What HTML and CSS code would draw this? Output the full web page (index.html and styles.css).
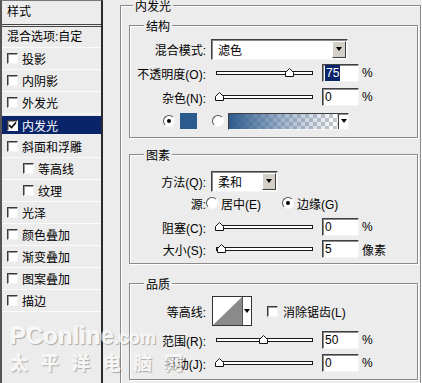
FILE: index.html
```html
<!DOCTYPE html>
<html lang="zh-CN">
<head>
    <meta charset="UTF-8">
    <title>图层样式 - 内发光</title>
    <link rel="stylesheet" href="styles.css">
</head>
<body>
    <div class="dialog">
        <!-- style list -->
        <div class="sidebar">
            <div class="side-head">样式</div>
            <div class="side-blend">混合选项:自定</div>
            <div class="side-item"><span class="cb"></span>投影</div>
            <div class="side-item"><span class="cb"></span>内阴影</div>
            <div class="side-item"><span class="cb"></span>外发光</div>
            <div class="side-item active"><span class="cb checked"><svg width="9" height="9" viewBox="0 0 9 9"><path d="M1 4 L3.5 6.5 L8 1.5" fill="none" stroke="#000" stroke-width="1.6"/></svg></span>内发光</div>
            <div class="side-item"><span class="cb"></span>斜面和浮雕</div>
            <div class="side-item sub"><span class="cb"></span>等高线</div>
            <div class="side-item sub"><span class="cb"></span>纹理</div>
            <div class="side-item"><span class="cb"></span>光泽</div>
            <div class="side-item"><span class="cb"></span>颜色叠加</div>
            <div class="side-item"><span class="cb"></span>渐变叠加</div>
            <div class="side-item"><span class="cb"></span>图案叠加</div>
            <div class="side-item"><span class="cb"></span>描边</div>
        </div>

        <div class="main">
            <fieldset class="outer">
                <legend class="outer-title">内发光</legend>

                <fieldset class="group structure">
                    <legend>结构</legend>
                    <div class="row">
                        <span class="lbl">混合模式:</span>
                        <div class="select blend-select"><span class="select-text">滤色</span><span class="drop-btn"><i class="arrow"></i></span></div>
                    </div>
                    <div class="row">
                        <span class="lbl">不透明度(O):</span>
                        <div class="slider"><div class="track"></div><svg class="thumb" style="left:74px" width="9" height="9" viewBox="0 0 9 9"><polygon points="0.5,8.5 0.5,4.5 4.5,0.5 8.5,4.5 8.5,8.5" fill="#fff" stroke="#111"/></svg></div>
                        <div class="num"><span class="sel">75</span></div>
                        <span class="unit">%</span>
                    </div>
                    <div class="row">
                        <span class="lbl">杂色(N):</span>
                        <div class="slider"><div class="track"></div><svg class="thumb" style="left:4px" width="9" height="9" viewBox="0 0 9 9"><polygon points="0.5,8.5 0.5,4.5 4.5,0.5 8.5,4.5 8.5,8.5" fill="#fff" stroke="#111"/></svg></div>
                        <div class="num">0</div>
                        <span class="unit">%</span>
                    </div>
                    <div class="row color-row">
                        <span class="radio checked"></span>
                        <span class="swatch"></span>
                        <span class="radio radio-grad"></span>
                        <div class="gradient"><div class="gradient-fill"></div><div class="gradient-drop"><i class="arrow"></i></div></div>
                    </div>
                </fieldset>

                <fieldset class="group elements">
                    <legend>图素</legend>
                    <div class="row">
                        <span class="lbl">方法(Q):</span>
                        <div class="select method-select"><span class="select-text">柔和</span><span class="drop-btn"><i class="arrow"></i></span></div>
                    </div>
                    <div class="row">
                        <span class="lbl">源:</span>
                        <span class="opt"><span class="radio"></span><span class="opt-text">居中(E)</span></span>
                        <span class="opt"><span class="radio checked"></span><span class="opt-text">边缘(G)</span></span>
                    </div>
                    <div class="row row-gap">
                        <span class="lbl">阻塞(C):</span>
                        <div class="slider"><div class="track"></div><svg class="thumb" style="left:4px" width="9" height="9" viewBox="0 0 9 9"><polygon points="0.5,8.5 0.5,4.5 4.5,0.5 8.5,4.5 8.5,8.5" fill="#fff" stroke="#111"/></svg></div>
                        <div class="num">0</div>
                        <span class="unit">%</span>
                    </div>
                    <div class="row">
                        <span class="lbl">大小(S):</span>
                        <div class="slider"><div class="track"></div><svg class="thumb" style="left:6px" width="9" height="9" viewBox="0 0 9 9"><polygon points="0.5,8.5 0.5,4.5 4.5,0.5 8.5,4.5 8.5,8.5" fill="#fff" stroke="#111"/></svg></div>
                        <div class="num">5</div>
                        <span class="unit">像素</span>
                    </div>
                </fieldset>

                <fieldset class="group quality">
                    <legend>品质</legend>
                    <div class="row contour-row">
                        <span class="lbl">等高线:</span>
                        <div class="contour">
                            <svg width="29" height="28" viewBox="0 0 29 28"><rect width="29" height="28" fill="#fff"/><polygon points="0,28 29,0 29,28" fill="#8a8a8a"/></svg>
                            <div class="contour-drop"><i class="arrow"></i></div>
                        </div>
                        <span class="cb aa-cb"></span>
                        <span>消除锯齿(L)</span>
                    </div>
                    <div class="row range-row">
                        <span class="lbl">范围(R):</span>
                        <div class="slider"><div class="track"></div><svg class="thumb" style="left:48px" width="9" height="9" viewBox="0 0 9 9"><polygon points="0.5,8.5 0.5,4.5 4.5,0.5 8.5,4.5 8.5,8.5" fill="#fff" stroke="#111"/></svg></div>
                        <div class="num">50</div>
                        <span class="unit">%</span>
                    </div>
                    <div class="row jitter-row">
                        <span class="lbl">抖动(J):</span>
                        <div class="slider"><div class="track"></div><svg class="thumb" style="left:4px" width="9" height="9" viewBox="0 0 9 9"><polygon points="0.5,8.5 0.5,4.5 4.5,0.5 8.5,4.5 8.5,8.5" fill="#fff" stroke="#111"/></svg></div>
                        <div class="num">0</div>
                        <span class="unit">%</span>
                    </div>
                </fieldset>
            </fieldset>
        </div>

        <!-- site watermark over the screenshot -->
        <div class="watermark">
            <div class="wm-logo">PConline<span class="wm-com">.com</span></div>
            <div class="wm-name">太平洋电脑网</div>
        </div>
    </div>
</body>
</html>
```

FILE: styles.css
```css
body {
    margin: 0;
    background: #ececec;
    font: 12px "Liberation Sans", "Noto Sans CJK SC", sans-serif;
    color: #000;
    width: 422px;
    height: 383px;
    overflow: hidden;
}

.dialog {
    display: flex;
    height: 383px;
    position: relative;
    overflow: hidden;
}

/* left list */
.sidebar {
    width: 99px;
    flex-shrink: 0;
    border-left: 2px solid #555;
    border-right: 2px solid #2a2a2a;
    border-top: 1px solid #777;
}

.side-head {
    height: 23px;
    line-height: 23px;
    padding-left: 5px;
    border-bottom: 3px double #444;
}

.side-blend {
    height: 20px;
    line-height: 20px;
    padding-left: 5px;
    border-bottom: 1px solid #fafafa;
}

.side-item {
    height: 21px;
    display: flex;
    align-items: center;
    padding-left: 5px;
    border-bottom: 1px solid #fafafa;
}

.side-item.sub {
    padding-left: 21px;
}

.side-item.active {
    height: 18px;
    background: #0a246a;
    color: #fff;
    border-top: 2px solid #ececec;
    border-bottom: 2px solid #ececec;
}

.cb {
    width: 9px;
    height: 9px;
    flex-shrink: 0;
    background: #fff;
    border: 1px solid;
    border-color: #3a3a3a #f4f4f4 #f4f4f4 #3a3a3a;
    box-shadow: inset 1px 1px 0 #9a9a9a;
    margin-right: 4px;
    display: flex;
    align-items: center;
    justify-content: center;
}

.cb svg {
    display: block;
}

/* right side */
.main {
    flex: 1;
    padding-left: 17px;
    padding-right: 1px;
    min-width: 0;
}

fieldset {
    margin: 0;
    min-width: 0;
    border: 1px solid #8a8a8a;
    box-shadow: inset 1px 1px 0 #fff, 1px 1px 0 #fff;
}

legend {
    height: 10px;
    line-height: 14px;
    padding: 0 2px;
    margin-left: 14px;
    background: #ececec;
}

.outer {
    padding: 10px 2px 30px 8px;
}

.outer-title {
    margin-left: 4px;
}

.group {
    padding: 0;
}

.structure {
    padding: 8px 0 5px;
}

.elements {
    margin-top: 11px;
    padding: 11px 0 3px;
}

.quality {
    margin-top: 14px;
    padding: 8px 0 5px;
}

.row {
    display: flex;
    align-items: center;
    height: 22px;
}

.structure .row + .row {
    margin-top: 2px;
}

.row-gap {
    margin-top: 2px;
}

.contour-row {
    height: 30px;
}

.range-row {
    margin-top: 3px;
}

.jitter-row {
    margin-top: 1px;
}

.lbl {
    width: 76px;
    flex-shrink: 0;
    text-align: right;
}

/* sunken controls */
.select,
.num,
.gradient {
    background: #fff;
    border: 1px solid;
    border-color: #404040 #f4f4f4 #f4f4f4 #404040;
    box-shadow: inset 1px 1px 0 #8a8a8a;
}

.select {
    display: flex;
    align-items: center;
    margin-left: 5px;
    height: 19px;
}

.blend-select {
    width: 135px;
}

.method-select {
    width: 65px;
}

.select-text {
    padding-left: 6px;
}

.drop-btn {
    margin-left: auto;
    margin-right: 1px;
    width: 12px;
    height: 15px;
    background: #d4d0c8;
    border: 1px solid;
    border-color: #fff #404040 #404040 #fff;
    display: flex;
    align-items: center;
    justify-content: center;
}

.arrow {
    width: 0;
    height: 0;
    border-left: 3px solid transparent;
    border-right: 3px solid transparent;
    border-top: 4px solid #000;
}

.slider {
    position: relative;
    width: 102px;
    height: 22px;
    margin-left: 5px;
    display: flex;
    align-items: center;
    flex-shrink: 0;
}

.track {
    margin-left: 5px;
    width: 95px;
    height: 2px;
    background: #fff;
    border: 1px solid #1a1a1a;
}

.thumb {
    position: absolute;
    top: 6px;
    display: block;
}

.num {
    width: 33px;
    height: 16px;
    line-height: 16px;
    padding-left: 2px;
    margin-left: 9px;
    flex-shrink: 0;
}

.sel {
    background: #0a246a;
    color: #fff;
    padding: 1px 1px;
}

.unit {
    margin-left: 3px;
}

/* colour row */
.color-row {
    padding-left: 33px;
}

.radio {
    width: 12px;
    height: 12px;
    box-sizing: border-box;
    border-radius: 50%;
    background: #fff;
    border: 1px solid;
    border-color: #555 #fafafa #fafafa #555;
    position: relative;
    flex-shrink: 0;
}

.radio.checked::after {
    content: "";
    position: absolute;
    left: 3px;
    top: 3px;
    width: 4px;
    height: 4px;
    border-radius: 50%;
    background: #000;
}

.swatch {
    width: 17px;
    height: 16px;
    margin-left: 5px;
    background: #2b5b8c;
    flex-shrink: 0;
}

.radio-grad {
    margin-left: 15px;
}

.gradient {
    display: flex;
    margin-left: 4px;
    width: 119px;
    height: 15px;
}

.gradient-fill {
    flex: 1;
    background:
        linear-gradient(to right, #2f5c8d, rgba(90, 125, 170, 0.55) 50%, rgba(255, 255, 255, 0)),
        repeating-conic-gradient(#c8c8c8 0 25%, #fff 0 50%) 0 0 / 8px 8px;
}

.gradient-drop {
    width: 9px;
    border-left: 1px solid #404040;
    display: flex;
    align-items: center;
    justify-content: center;
}

/* source radios */
.opt {
    display: flex;
    align-items: center;
    width: 76px;
    flex-shrink: 0;
}

.opt:first-of-type {
    margin-left: 6px;
}

.opt-text {
    margin-left: 3px;
}

/* contour */
.contour {
    display: flex;
    margin-left: 6px;
    width: 38px;
    height: 28px;
    border: 1px solid #333;
    background: #fff;
}

.contour svg {
    display: block;
}

.contour-drop {
    flex: 1;
    border-left: 1px solid #555;
    display: flex;
    align-items: center;
    justify-content: center;
}

.aa-cb {
    margin-left: 15px;
    margin-right: 5px;
}

/* watermark */
.watermark {
    position: absolute;
    left: 10px;
    top: 322px;
    color: #fbfbfb;
    opacity: 0.7;
    text-shadow: 1px 1px 1px rgba(0, 0, 0, 0.4), -1px -1px 0 rgba(255, 255, 255, 0.7);
    pointer-events: none;
    font-weight: bold;
}

.wm-logo {
    font-size: 24px;
    line-height: 28px;
    font-family: "Liberation Sans", sans-serif;
}

.wm-com {
    font-size: 18px;
}

.wm-name {
    font-size: 18px;
    line-height: 20px;
    letter-spacing: 13px;
    font-family: "Noto Sans CJK SC", sans-serif;
}
```
